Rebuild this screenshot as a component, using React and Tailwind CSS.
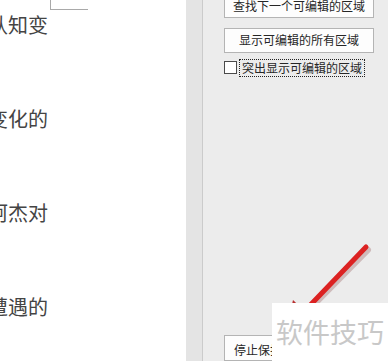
export default function App() {
    const lines = ['认知变', '变化的', '柯杰对', '遭遇的'];
    const font = {fontFamily: '"Noto Sans CJK SC", "Noto Sans", sans-serif'};

    return (
        <div className="relative flex h-[361px] w-[388px] overflow-hidden bg-white" style={font}>
            {/* document page */}
            <div className="flex w-[186px] shrink-0 flex-col overflow-hidden bg-white">
                <div className="ml-[50px] h-[10px] w-[38px] border-b border-l border-[#a9a9a9]"></div>
                <div className="mt-[5px] flex flex-col gap-[74px]">
                    {lines.map((line) => (
                        <div key={line} className="-ml-[12px] whitespace-nowrap text-[20px] leading-[20px] text-[#444]">
                            {line}
                        </div>
                    ))}
                </div>
            </div>

            {/* scroll strip */}
            <div className="w-[16px] shrink-0 bg-[#e4e4e4]"></div>
            <div className="w-px shrink-0 bg-[#cbcbcb]"></div>

            {/* restrict editing pane */}
            <div className="flex flex-1 flex-col bg-[#ececec] pl-[21px] text-[12px] text-[#262626]">
                <button className="-mt-[8px] flex h-[29px] w-[150px] items-center justify-center border border-[#b4b4b4] bg-[#fdfdfd] pt-[2px]">
                    查找下一个可编辑的区域
                </button>
                <button className="mt-[10px] flex h-[29px] w-[150px] items-center justify-center border border-[#b4b4b4] bg-[#fdfdfd]">
                    显示可编辑的所有区域
                </button>
                <div className="mt-[6px] flex h-[18px] items-center gap-[2px]">
                    <div className="h-[13px] w-[13px] border border-[#4a4a4a] bg-white"></div>
                    <div className="flex h-[18px] items-center border border-dotted border-[#222] px-[2px]">
                        突出显示可编辑的区域
                    </div>
                </div>
                <button className="mt-[258px] flex h-[29px] w-[150px] items-start border border-[#b4b4b4] bg-[#fdfdfd] pl-[9px] pt-[5px]">
                    停止保护
                </button>
            </div>

            {/* red annotation arrow */}
            <svg className="pointer-events-none absolute left-0 top-0" width="388" height="361" viewBox="0 0 388 361">
                <line x1="368" y1="250" x2="296" y2="323" stroke="rgba(120,40,40,0.25)" strokeWidth="6" strokeLinecap="round" />
                <line x1="366" y1="247" x2="296" y2="320" stroke="#dc2222" strokeWidth="5" strokeLinecap="round" />
                <polygon points="286,330 293,300 316,322" fill="#b83030" />
            </svg>

            {/* watermark */}
            <div className="absolute bottom-0 right-0 flex h-[58px] w-[116px] items-center justify-center bg-white text-[27px] text-[#c8c8c8]">
                软件技巧
            </div>
        </div>
    );
}
